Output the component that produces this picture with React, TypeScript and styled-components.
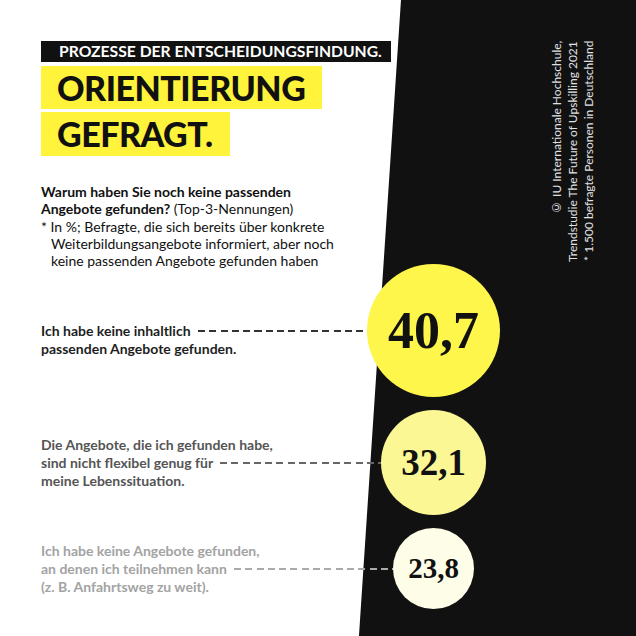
import React from "react";
import styled, { createGlobalStyle } from "styled-components";

const Global = createGlobalStyle`
  html, body { margin: 0; padding: 0; background: #fff; }
  * { box-sizing: border-box; }
`;

const Canvas = styled.div`
  width: 636px;
  height: 636px;
  overflow: hidden;
  padding: 41px 36px 0 41px;
  display: flex;
  background: linear-gradient(93.78deg, #fff 399.6px, #111 400.6px);
  font-family: Lato, "Noto Sans", sans-serif;
  color: #111;
`;

const MainColumn = styled.div`
  width: 459px;
  display: flex;
  flex-direction: column;
  align-items: flex-start;
`;

const TitleBar = styled.div`
  background: #111;
  color: #fff;
  font-size: 15.7px;
  font-weight: 700;
  height: 21px;
  line-height: 21px;
  padding: 0 9px 0 18px;
  white-space: nowrap;
`;

const Headline = styled.div<{ $gap: number; $h: number }>`
  margin-top: ${(p) => p.$gap}px;
  background: #fff33b;
  font-size: 34px;
  letter-spacing: -0.5px;
  font-weight: 900;
  height: ${(p) => p.$h}px;
  line-height: ${(p) => p.$h}px;
  padding: 0 17px 0 16px;
  white-space: nowrap;
  color: #111;
`;

const Question = styled.div`
  margin-top: 27px;
  font-size: 14px;
  line-height: 17.3px;
  color: #111;
  white-space: nowrap;
`;

const Strong = styled.span`
  font-weight: 700;
`;

const Note = styled.div`
  padding-left: 10px;
  text-indent: -10px;
`;

const Rows = styled.div`
  margin-top: -5px;
  width: 100%;
  display: flex;
  flex-direction: column;
  gap: 13px;
`;

const Row = styled.div<{ $d: number }>`
  display: flex;
  align-items: center;
  height: ${(p) => p.$d}px;
`;

const LabelArea = styled.div<{ $color: string }>`
  flex: 1;
  height: 100%;
  display: grid;
  grid-template-rows: 1fr auto 1fr;
  font-size: 14px;
  font-weight: 700;
  line-height: 18px;
  color: ${(p) => p.$color};
  white-space: nowrap;
`;

const Before = styled.div`
  align-self: end;
`;

const After = styled.div`
  align-self: start;
`;

const DashLine = styled.div`
  display: flex;
  align-items: center;
`;

const Dash = styled.div<{ $color: string }>`
  flex: 1;
  height: 1.5px;
  margin-left: 7px;
  background-image: repeating-linear-gradient(
    to right,
    ${(p) => p.$color} 0 7px,
    transparent 7px 11.3px
  );
`;

const Circle = styled.div<{ $d: number; $bg: string; $fs: number }>`
  flex-shrink: 0;
  width: ${(p) => p.$d}px;
  height: ${(p) => p.$d}px;
  margin-right: ${(p) => (133 - p.$d) / 2}px;
  border-radius: 50%;
  background: ${(p) => p.$bg};
  display: flex;
  align-items: center;
  justify-content: center;
  font-family: "Liberation Serif", "DejaVu Serif", serif;
  font-weight: 700;
  font-size: ${(p) => p.$fs}px;
  color: #111;
`;

const Credits = styled.div`
  margin-left: auto;
  writing-mode: vertical-rl;
  transform: rotate(180deg);
  text-align: end;
  font-size: 12px;
  line-height: 16px;
  color: #e2e2e2;
  white-space: nowrap;
`;

const CreditNote = styled.div`
  margin-left: 3px;
`;

type Item = {
  before?: string;
  line: string;
  after?: string;
  value: string;
  d: number;
  fs: number;
  bg: string;
  color: string;
  dash: string;
};

const items: Item[] = [
  {
    line: "Ich habe keine inhaltlich",
    after: "passenden Angebote gefunden.",
    value: "40,7",
    d: 133,
    fs: 52,
    bg: "#fef64a",
    color: "#1e1e1e",
    dash: "#333",
  },
  {
    before: "Die Angebote, die ich gefunden habe,",
    line: "sind nicht flexibel genug für",
    after: "meine Lebenssituation.",
    value: "32,1",
    d: 105,
    fs: 37,
    bg: "#fcf795",
    color: "#555",
    dash: "#666",
  },
  {
    before: "Ich habe keine Angebote gefunden,",
    line: "an denen ich teilnehmen kann",
    after: "(z. B. Anfahrtsweg zu weit).",
    value: "23,8",
    d: 81,
    fs: 29,
    bg: "#fefde8",
    color: "#a3a3a3",
    dash: "#aaa",
  },
];

export default function App() {
  return (
    <>
      <Global />
      <Canvas>
        <MainColumn>
          <TitleBar>PROZESSE DER ENTSCHEIDUNGSFINDUNG.</TitleBar>
          <Headline $gap={4} $h={43}>ORIENTIERUNG</Headline>
          <Headline $gap={3} $h={44}>GEFRAGT.</Headline>
          <Question>
            <Strong>Warum haben Sie noch keine passenden</Strong>
            <br />
            <Strong>Angebote gefunden?</Strong> (Top-3-Nennungen)
            <Note>
              * In %; Befragte, die sich bereits über konkrete
              <br />
              Weiterbildungsangebote informiert, aber noch
              <br />
              keine passenden Angebote gefunden haben
            </Note>
          </Question>
          <Rows>
            {items.map((it) => (
              <Row key={it.value} $d={it.d}>
                <LabelArea $color={it.color}>
                  <Before>{it.before}</Before>
                  <DashLine>
                    <span>{it.line}</span>
                    <Dash $color={it.dash} />
                  </DashLine>
                  <After>{it.after}</After>
                </LabelArea>
                <Circle $d={it.d} $bg={it.bg} $fs={it.fs}>
                  {it.value}
                </Circle>
              </Row>
            ))}
          </Rows>
        </MainColumn>
        <Credits>
          <div>© IU Internationale Hochschule,</div>
          <div>Trendstudie The Future of Upskilling 2021</div>
          <CreditNote>* 1.500 befragte Personen in Deutschland</CreditNote>
        </Credits>
      </Canvas>
    </>
  );
}
